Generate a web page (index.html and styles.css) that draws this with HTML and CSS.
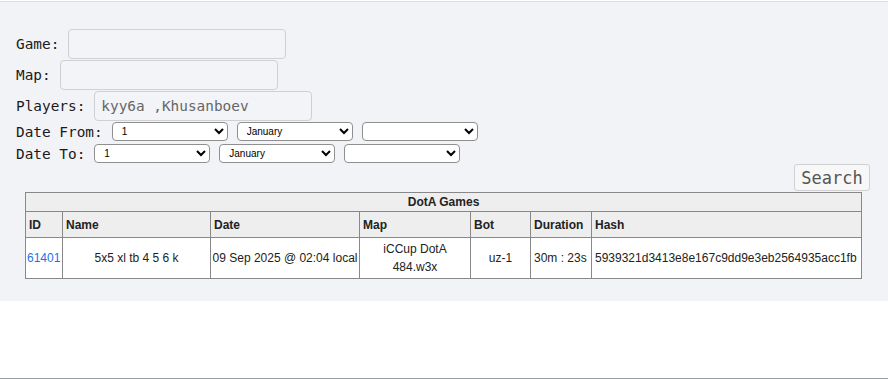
FILE: index.html
```html
<!DOCTYPE html>
<html>
<head>
<meta charset="utf-8">
<link rel="stylesheet" href="styles.css">
</head>
<body>
<div class="topbar"></div>
<div class="panel">
  <form class="form">
    <div class="row"><label>Game:</label><input class="txt" type="text"></div>
    <div class="row"><label>Map:</label><input class="txt" type="text"></div>
    <div class="row"><label>Players:</label><input class="txt" type="text" value="kyy6a ,Khusanboev"></div>
    <div class="row drow"><label>Date From:</label>
      <select class="sel"><option>1</option></select>
      <select class="sel"><option>January</option></select>
      <select class="sel"><option></option></select>
    </div>
    <div class="row drow"><label>Date To:</label>
      <select class="sel"><option>1</option></select>
      <select class="sel"><option>January</option></select>
      <select class="sel"><option></option></select>
    </div>
    <div class="btnrow"><button type="button" class="btn">Search</button></div>
  </form>
  <table class="games">
    <colgroup>
      <col style="width:37px"><col style="width:148px"><col style="width:149px"><col style="width:111px"><col style="width:60px"><col style="width:61px"><col style="width:270px">
    </colgroup>
    <tr><th colspan="7" class="title">DotA Games</th></tr>
    <tr class="heads"><th>ID</th><th>Name</th><th>Date</th><th>Map</th><th>Bot</th><th>Duration</th><th>Hash</th></tr>
    <tr class="data">
      <td class="id"><a href="#">61401</a></td>
      <td class="c">5x5 xl tb 4 5 6 k</td>
      <td class="c dt">09 Sep 2025 @ 02:04 local</td>
      <td class="c">iCCup DotA 484.w3x</td>
      <td class="c">uz-1</td>
      <td>30m : 23s</td>
      <td>5939321d3413e8e167c9dd9e3eb2564935acc1fb</td>
    </tr>
  </table>
</div>
<div class="spacer"></div>
</body>
</html>
```
FILE: styles.css
```css
html, body { margin: 0; padding: 0; background: #fff; }
body { height: 379px; overflow: hidden; display: flex; flex-direction: column; }
.topbar { height: 1px; background: #fff; border-bottom: 1px solid #dcdde1; }
.panel { background: #f2f3f7; height: 299px; box-sizing: border-box; padding: 27px 18px 0 16px; }
.form { margin: 0; }
.row { display: flex; align-items: center; gap: 9px; margin-bottom: 1px; }
.row label { font-family: "DejaVu Sans Mono", monospace; font-size: 14.4px; color: #1a1a1a; white-space: pre; }
.txt { width: 218px; height: 30px; box-sizing: border-box; border: 1px solid #cfd0d4; border-radius: 4px; background: #f3f4f8; font-family: "DejaVu Sans Mono", monospace; font-size: 14.4px; color: #666; padding: 0 6px; margin: 0; outline: none; }
.drow { gap: 9px; margin-bottom: 3px; }
.sel { width: 116px; height: 19px; box-sizing: border-box; font-family: "Liberation Sans", Arial, sans-serif; font-size: 10px; border: 1px solid #8f8f8f; border-radius: 4px; background: #fff; margin: 0; padding: 0 0 0 5px; color: #000; }
.btnrow { display: flex; justify-content: flex-end; margin-top: -2px; }
.btn { width: 76px; height: 27px; font-family: "DejaVu Sans Mono", monospace; font-size: 17px; color: #555; background: #f7f7f8; border: 1px solid #cfd0d4; border-radius: 3px; padding: 0; }
.games { margin: 1px 0 0 9px; width: 836px; border-collapse: collapse; font-family: "Liberation Sans", Arial, sans-serif; font-size: 12px; color: #222; table-layout: fixed; background: #fff; }
.games th, .games td { border: 1px solid #888; padding: 2px 3px; }
.games th { background: #eee; font-weight: bold; text-align: left; }
.games th.title { text-align: center; height: 14px; }
.heads th { height: 21px; }
.data td { height: 32px; line-height: 18px; white-space: nowrap; }
.data td.c { text-align: center; white-space: normal; }
.data td.dt { white-space: nowrap; padding: 2px 1px; }
.data td.id { padding: 2px 1px; }
.data a { color: #1a73e8; text-decoration: none; }
.spacer { flex: 1; border-bottom: 1px solid #9aa0a6; }
```
